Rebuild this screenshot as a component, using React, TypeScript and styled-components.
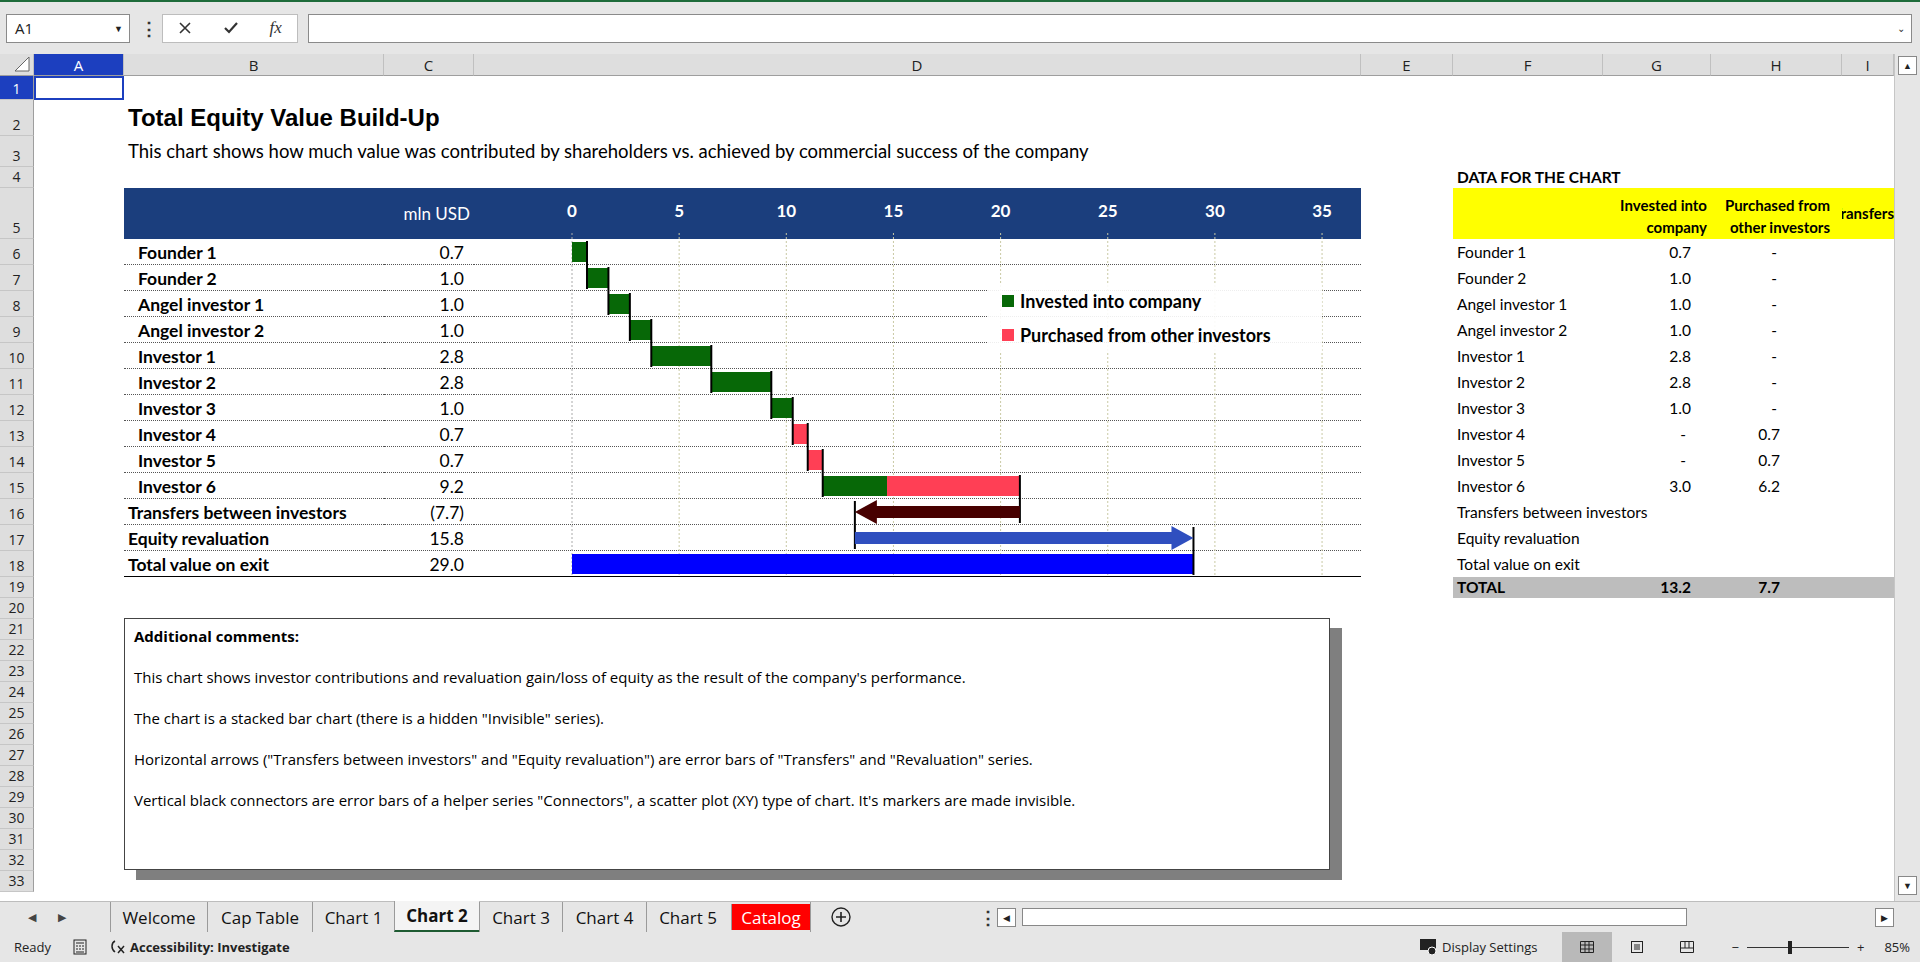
import React from "react";
import styled, { createGlobalStyle, css } from "styled-components";

const Global = createGlobalStyle`
  html, body { margin: 0; padding: 0; height: 100%; overflow: hidden; }
  body { font-family: Lato, "Open Sans", sans-serif; background: #e6e6e6; }
  #root { height: 100%; }
`;

const COLS = [34, 90, 260, 90, 887, 92, 150, 108, 131, 52];
const COLNAMES = ["", "A", "B", "C", "D", "E", "F", "G", "H", "I"];
const GRID = COLS.map((c) => c + "px").join(" ");
const BLUE = "#1b3e7d";

const Page = styled.div`
  width: 1920px; height: 962px; display: flex; flex-direction: column; background: #e6e6e6;
  border-top: 2px solid #1e6b3a; box-sizing: border-box;
`;
const FormulaBar = styled.div`
  height: 52px; display: flex; align-items: center; gap: 10px; padding: 0 8px 0 6px; box-sizing: border-box;
`;
const NameBox = styled.div`
  width: 124px; height: 29px; background: #fff; border: 1px solid #8a8a8a; box-sizing: border-box;
  display: flex; align-items: center; justify-content: space-between; padding: 0 6px 0 8px;
  font: 15px "Open Sans", sans-serif; color: #222;
`;
const Dots = styled.div`font: bold 18px "Open Sans", sans-serif; color: #333; width: 12px; text-align: center;`;
const FxBox = styled.div`
  width: 136px; height: 29px; background: #fff; border: 1px solid #bdbdbd; box-sizing: border-box;
  display: flex; align-items: center; justify-content: space-around; font-size: 18px; color: #333;
`;
const Fx = styled.span`font: italic 17px "Liberation Serif", serif;`;
const Formula = styled.div`
  flex: 1; height: 29px; background: #fff; border: 1px solid #8a8a8a; box-sizing: border-box;
  display: flex; align-items: center; justify-content: flex-end; padding-right: 6px; font-size: 12px; color: #333;
`;
const SheetWrap = styled.div`flex: 1; display: flex; min-height: 0; overflow: hidden;`;
const Sheet = styled.div`flex: 1; background: #fff; position: relative; overflow: hidden;`;
const VScroll = styled.div`
  width: 26px; background: #e6e6e6; display: flex; flex-direction: column; justify-content: space-between;
  padding: 2px 3px 6px; box-sizing: border-box; border-left: 1px solid #c6c6c6;
`;
const SBtn = styled.div`
  width: 19px; height: 19px; border: 1px solid #888; background: #fff; box-sizing: border-box;
  display: flex; align-items: center; justify-content: center; font-size: 9px; color: #222;
`;
const Row = styled.div<{ $h: number }>`
  display: grid; grid-template-columns: ${GRID}; height: ${(p) => p.$h}px;
`;
const ColHead = styled.div<{ $sel?: boolean }>`
  background: ${(p) => (p.$sel ? "#1c3fbf" : "#dedede")}; color: ${(p) => (p.$sel ? "#fff" : "#222")};
  border-right: 1px solid #c0c0c0; border-bottom: 1px solid #9e9e9e; box-sizing: border-box;
  font: 15px "Open Sans", sans-serif; display: flex; align-items: center; justify-content: center;
`;
const Corner = styled(ColHead)`position: relative;`;
const RowHead = styled.div<{ $sel?: boolean }>`
  background: ${(p) => (p.$sel ? "#1c3fbf" : "#dedede")}; color: ${(p) => (p.$sel ? "#fff" : "#222")};
  border-bottom: 1px solid #c6c6c6; border-right: 1px solid #9e9e9e; box-sizing: border-box;
  font: 14px "Open Sans", sans-serif; display: flex; align-items: flex-end; justify-content: center; padding-bottom: 1px;
`;
type CellP = {
  $bg?: string; $line?: "dot" | "solid"; $align?: string; $bold?: boolean; $color?: string;
  $size?: number; $pad?: number; $valign?: string; $font?: string;
};
const Cell = styled.div<CellP>`
  position: relative; box-sizing: border-box; white-space: nowrap; overflow: visible; display: flex;
  align-items: ${(p) => p.$valign || "flex-end"}; justify-content: ${(p) => p.$align || "flex-start"};
  padding: 0 ${(p) => p.$pad ?? 4}px 1px; background: ${(p) => p.$bg || "transparent"};
  color: ${(p) => p.$color || "#000"}; font-weight: ${(p) => (p.$bold ? 700 : 400)};
  font-size: ${(p) => p.$size || 16}px; font-family: ${(p) => p.$font || 'Lato, "Open Sans", sans-serif'};
  ${(p) => p.$line === "dot" && css`border-bottom: 1px dotted #555;`}
  ${(p) => p.$line === "solid" && css`border-bottom: 1px solid #000;`}
`;
const Clip = styled(Cell)`overflow: hidden; justify-content: flex-end; padding-right: 0;`;
const SelCell = styled(Cell)`border: 2px solid #1c3fbf;`;
const TwoLine = styled.div`text-align: right; line-height: 22px;`;

const ChartSvg = styled.svg`position: absolute; left: 0; top: 0; overflow: visible; pointer-events: none; z-index: 1;`;
const Legend = styled.div`
  position: absolute; left: 988px; top: 230px; width: 334px; padding: 6px 14px; box-sizing: border-box;
  background: rgba(255,255,255,0.9); display: flex; flex-direction: column; gap: 12px; z-index: 2;
  font: 700 18px Lato, sans-serif;
`;
const LegItem = styled.div`display: flex; align-items: center; gap: 6px;`;
const Swatch = styled.span<{ $c: string }>`width: 12px; height: 12px; background: ${(p) => p.$c};`;
const Comment = styled.div`
  position: absolute; left: 124px; top: 564px; width: 1206px; height: 252px; background: #fff;
  border: 1px solid #444; box-sizing: border-box; box-shadow: 12px 10px 0 #7f7f7f; padding: 6px 9px;
  font: 15px "Open Sans", sans-serif; color: #000; z-index: 2;
`;
const CLine = styled.p<{ $b?: boolean }>`margin: 0 0 19px; line-height: 22px; font-weight: ${(p) => (p.$b ? 700 : 400)};`;

const TabBar = styled.div`height: 30px; display: flex; align-items: stretch; border-top: 1px solid #bdbdbd; background: #e6e6e6;`;
const TabNav = styled.div`width: 110px; display: flex; align-items: center; gap: 22px; padding-left: 28px; font-size: 11px; color: #444; box-sizing: border-box;`;
const Tab = styled.div<{ $active?: boolean; $red?: boolean; $w: number }>`
  width: ${(p) => p.$w}px; display: flex; align-items: center; justify-content: center;
  border-left: 1px solid #9a9a9a; font: ${(p) => (p.$active ? 700 : 400)} 17px "Open Sans", sans-serif;
  color: ${(p) => (p.$red ? "#fff" : "#111")}; background: ${(p) => (p.$red ? "#ff0000" : p.$active ? "#f4f4f4" : "transparent")};
  ${(p) => p.$active && css`border-bottom: 2px solid #1e5b32; margin-top: -1px;`}
  ${(p) => p.$red && css`margin: 2px 0 2px 2px;`}
`;
const AddTab = styled.div`width: 60px; display: flex; align-items: center; justify-content: center; border-left: 1px solid #9a9a9a;`;
const HScrollArea = styled.div`flex: 1; display: flex; align-items: center; gap: 6px; padding: 0 26px 0 18px;`;
const HTrack = styled.div`flex: 1; display: flex; align-items: center;`;
const HThumb = styled.div`width: 665px; height: 18px; background: #fff; border: 1px solid #888; box-sizing: border-box;`;
const Status = styled.div`
  height: 30px; display: flex; align-items: center; padding: 0 10px 0 14px; font: 13px "Open Sans", sans-serif; color: #222;
`;
const StatusLeft = styled.div`display: flex; align-items: center; gap: 22px; flex: 1;`;
const StatusRight = styled.div`display: flex; align-items: stretch; height: 100%; gap: 0;`;
const ViewBtn = styled.div<{ $on?: boolean }>`width: 50px; display: flex; align-items: center; justify-content: center; background: ${(p) => (p.$on ? "#b9b9b9" : "transparent")};`;
const Zoom = styled.div`display: flex; align-items: center; gap: 8px; padding-left: 20px;`;
const Slider = styled.div`position: relative; width: 102px; height: 1px; background: #333;`;
const Knob = styled.div`position: absolute; left: 41px; top: -6px; width: 4px; height: 13px; background: #222;`;
const Bold = styled.b`font-weight: 700;`;

const ROWH = [24, 36, 31, 21, 51, ...Array(13).fill(26), ...Array(15).fill(21)];

const data: [string, string, string, string][] = [
  ["Founder 1", "0.7", "0.7", "-"],
  ["Founder 2", "1.0", "1.0", "-"],
  ["Angel investor 1", "1.0", "1.0", "-"],
  ["Angel investor 2", "1.0", "1.0", "-"],
  ["Investor 1", "2.8", "2.8", "-"],
  ["Investor 2", "2.8", "2.8", "-"],
  ["Investor 3", "1.0", "1.0", "-"],
  ["Investor 4", "0.7", "-", "0.7"],
  ["Investor 5", "0.7", "-", "0.7"],
  ["Investor 6", "9.2", "3.0", "6.2"],
  ["Transfers between investors", "(7.7)", "", ""],
  ["Equity revaluation", "15.8", "", ""],
  ["Total value on exit", "29.0", "", ""],
];

const U = 21.43, X0 = 98, HDR = 51, RH = 26;
const x = (v: number) => X0 + v * U;
const rt = (i: number) => HDR + i * RH;
const GREEN = "#076807", RED = "#ff3f55";

function Chart() {
  const bars: [number, number, number, string][] = [
    [0, 0, 0.7, GREEN], [1, 0.7, 1, GREEN], [2, 1.7, 1, GREEN], [3, 2.7, 1, GREEN],
    [4, 3.7, 2.8, GREEN], [5, 6.5, 2.8, GREEN], [6, 9.3, 1, GREEN], [7, 10.3, 0.7, RED],
    [8, 11.0, 0.7, RED], [9, 11.7, 3.0, GREEN], [9, 14.7, 6.2, RED], [12, 0, 29, "#0000ff"],
  ];
  const conns: [number, number, number][] = [
    [0.7, 0, 1], [1.7, 1, 2], [2.7, 2, 3], [3.7, 3, 4], [6.5, 4, 5], [9.3, 5, 6], [10.3, 6, 7],
    [11.0, 7, 8], [11.7, 8, 9], [20.9, 9, 10], [13.2, 10, 11], [29, 11, 12],
  ];
  const ty = rt(10) + 13, ey = rt(11) + 13;
  return (
    <ChartSvg width={887} height={HDR + 13 * RH}>
      {[0, 5, 10, 15, 20, 25, 30, 35].map((v) => (
        <g key={v}>
          <text x={x(v)} y={29} fill="#fff" fontSize={17} fontWeight={700} textAnchor="middle" fontFamily="Lato, sans-serif">{v}</text>
          <line x1={x(v)} x2={x(v)} y1={HDR - 6} y2={rt(13)} stroke={v === 0 ? "#aaa" : "#c9c9a4"} strokeDasharray="2 2" />
        </g>
      ))}
      {bars.map(([i, s, w, c], k) => (
        <rect key={k} x={x(s)} y={rt(i) + 3} width={w * U} height={20} fill={c} />
      ))}
      {conns.map(([v, a, b], k) => (
        <line key={k} x1={x(v)} x2={x(v)} y1={rt(a) + 2} y2={rt(b) + 24} stroke="#000" strokeWidth={2} />
      ))}
      <polygon
        points={`${x(20.9)},${ty - 6} ${x(13.2) + 22},${ty - 6} ${x(13.2) + 22},${ty - 12} ${x(13.2)},${ty} ${x(13.2) + 22},${ty + 12} ${x(13.2) + 22},${ty + 6} ${x(20.9)},${ty + 6}`}
        fill="#470000"
      />
      <polygon
        points={`${x(13.2)},${ey - 6} ${x(29) - 22},${ey - 6} ${x(29) - 22},${ey - 12} ${x(29)},${ey} ${x(29) - 22},${ey + 12} ${x(29) - 22},${ey + 6} ${x(13.2)},${ey + 6}`}
        fill="#2f4fbf"
      />
    </ChartSvg>
  );
}

function SheetRow({ r }: { r: number }) {
  const h = ROWH[r - 1];
  const idx = r - 6;
  const empty = (n: number) => Array.from({ length: n }, (_, i) => <Cell key={"e" + i} />);
  let cells: React.ReactNode;
  if (r === 1) {
    cells = [<SelCell key="a" />, ...empty(8)];
  } else if (r === 2) {
    cells = [<Cell key="a" />, <Cell key="b" $bold $size={24} $font='"Liberation Sans", Arial, sans-serif' $valign="center">Total Equity Value Build-Up</Cell>, ...empty(7)];
  } else if (r === 3) {
    cells = [<Cell key="a" />, <Cell key="b" $size={18.5} $valign="center">This chart shows how much value was contributed by shareholders vs. achieved by commercial success of the company</Cell>, ...empty(7)];
  } else if (r === 4) {
    cells = [...empty(5), <Cell key="f" $bold $size={15.5} $valign="center">DATA FOR THE CHART</Cell>, ...empty(3)];
  } else if (r === 5) {
    cells = [
      <Cell key="a" />,
      <Cell key="b" $bg={BLUE} />,
      <Cell key="c" $bg={BLUE} $color="#fff" $align="flex-end" $valign="center" $size={17}>mln USD</Cell>,
      <Cell key="d" $bg={BLUE}><Chart /></Cell>,
      <Cell key="e" />,
      <Cell key="f" $bg="#ffff00" />,
      <Cell key="g" $bg="#ffff00" $bold $size={15} $align="flex-end"><TwoLine>Invested into<br />company</TwoLine></Cell>,
      <Cell key="h" $bg="#ffff00" $bold $size={15} $align="flex-end" $pad={12}><TwoLine>Purchased from<br />other investors</TwoLine></Cell>,
      <Clip key="i" $bg="#ffff00" $bold $size={15} $valign="center">Transfers</Clip>,
    ];
  } else if (r >= 6 && r <= 18) {
    const d = data[idx];
    const line = r === 18 ? "solid" : "dot";
    cells = [
      <Cell key="a" />,
      <Cell key="b" $line={line} $bold $size={17.5} $pad={r <= 15 ? 14 : 4}>{d[0]}</Cell>,
      <Cell key="c" $line={line} $size={17.5} $align="flex-end" $pad={10}>{d[1]}</Cell>,
      <Cell key="d" $line={line} />,
      <Cell key="e" />,
      <Cell key="f" $size={15.5} $valign="center">{d[0]}</Cell>,
      <Cell key="g" $size={15.5} $valign="center" $align="flex-end" $pad={d[2] === "-" ? 25 : 20}>{d[2]}</Cell>,
      <Cell key="h" $size={15.5} $valign="center" $align="flex-end" $pad={d[3] === "-" ? 65 : 62}>{d[3]}</Cell>,
      <Cell key="i" />,
    ];
  } else if (r === 19) {
    cells = [
      ...empty(5),
      <Cell key="f" $bg="#bdbdbd" $bold $size={15.5} $valign="center">TOTAL</Cell>,
      <Cell key="g" $bg="#bdbdbd" $bold $size={15.5} $align="flex-end" $pad={20} $valign="center">13.2</Cell>,
      <Cell key="h" $bg="#bdbdbd" $bold $size={15.5} $align="flex-end" $pad={62} $valign="center">7.7</Cell>,
      <Cell key="i" $bg="#bdbdbd" />,
    ];
  } else {
    cells = empty(9);
  }
  return (
    <Row $h={h}>
      <RowHead $sel={r === 1}>{r}</RowHead>
      {cells}
    </Row>
  );
}

export default function App() {
  return (
    <Page>
      <Global />
      <FormulaBar>
        <NameBox><span>A1</span><span style={{ fontSize: 9 }}>▼</span></NameBox>
        <Dots>⋮</Dots>
        <FxBox>
          <svg width="14" height="14" viewBox="0 0 14 14"><path d="M2 2 L12 12 M12 2 L2 12" stroke="#333" strokeWidth="1.6" /></svg>
          <svg width="16" height="14" viewBox="0 0 16 14"><path d="M2 7 L6 11 L14 2" stroke="#333" strokeWidth="2.2" fill="none" /></svg>
          <Fx>fx</Fx>
        </FxBox>
        <Formula><span style={{ fontSize: 10 }}>⌄</span></Formula>
      </FormulaBar>
      <SheetWrap>
        <Sheet>
          <Row $h={22}>
            {COLNAMES.map((n, i) =>
              i === 0 ? (
                <Corner key={i}>
                  <svg width="16" height="16" viewBox="0 0 16 16" style={{ position: "absolute", right: 3, bottom: 3 }}>
                    <path d="M15 1 L15 15 L1 15 Z" fill="#fff" stroke="#666" />
                  </svg>
                </Corner>
              ) : (
                <ColHead key={i} $sel={i === 1}>{n}</ColHead>
              )
            )}
          </Row>
          {ROWH.map((_, i) => <SheetRow key={i} r={i + 1} />)}
          <Legend>
            <LegItem><Swatch $c={GREEN} />Invested into company</LegItem>
            <LegItem><Swatch $c={RED} />Purchased from other investors</LegItem>
          </Legend>
          <Comment>
            <CLine $b>Additional comments:</CLine>
            <CLine>This chart shows investor contributions and revaluation gain/loss of equity as the result of the company's performance.</CLine>
            <CLine>The chart is a stacked bar chart (there is a hidden "Invisible" series).</CLine>
            <CLine>Horizontal arrows ("Transfers between investors" and "Equity revaluation") are error bars of "Transfers" and "Revaluation" series.</CLine>
            <CLine>Vertical black connectors are error bars of a helper series "Connectors", a scatter plot (XY) type of chart. It's markers are made invisible.</CLine>
          </Comment>
        </Sheet>
        <VScroll>
          <SBtn>▲</SBtn>
          <SBtn>▼</SBtn>
        </VScroll>
      </SheetWrap>
      <TabBar>
        <TabNav><span>◀</span><span>▶</span></TabNav>
        <Tab $w={96}>Welcome</Tab>
        <Tab $w={104}>Cap Table</Tab>
        <Tab $w={81}>Chart 1</Tab>
        <Tab $w={84} $active>Chart 2</Tab>
        <Tab $w={82}>Chart 3</Tab>
        <Tab $w={83}>Chart 4</Tab>
        <Tab $w={82}>Chart 5</Tab>
        <Tab $w={78} $red>Catalog</Tab>
        <AddTab>
          <svg width="22" height="22" viewBox="0 0 22 22"><circle cx="11" cy="11" r="9" fill="none" stroke="#222" strokeWidth="1.4" /><path d="M11 6 V16 M6 11 H16" stroke="#222" strokeWidth="1.6" /></svg>
        </AddTab>
        <HScrollArea>
          <Dots style={{ marginLeft: 90 }}>⋮</Dots>
          <SBtn>◀</SBtn>
          <HTrack><HThumb /></HTrack>
          <SBtn>▶</SBtn>
        </HScrollArea>
      </TabBar>
      <Status>
        <StatusLeft>
          <span>Ready</span>
          <svg width="14" height="16" viewBox="0 0 14 16"><rect x="1" y="1" width="12" height="14" fill="none" stroke="#222" /><path d="M3 4 H11 M3 7 H5 M6 7 H8 M9 7 H11 M3 10 H5 M6 10 H8 M9 10 H11 M3 13 H11" stroke="#222" /></svg>
          <span style={{ display: "flex", alignItems: "center", gap: 3 }}>
            <svg width="18" height="16" viewBox="0 0 18 16"><path d="M6 2 C2 4 2 10 6 13 M9 7 L15 14 M15 7 L9 14" stroke="#222" strokeWidth="1.5" fill="none" /></svg>
            <Bold>Accessibility: Investigate</Bold>
          </span>
        </StatusLeft>
        <StatusRight>
          <span style={{ display: "flex", alignItems: "center", gap: 4, paddingRight: 24 }}>
            <svg width="18" height="16" viewBox="0 0 18 16"><rect x="0" y="0" width="16" height="11" fill="#222" /><circle cx="12" cy="12" r="4" fill="#222" stroke="#fff" /></svg>
            Display Settings
          </span>
          <ViewBtn $on><svg width="14" height="12" viewBox="0 0 14 12"><path d="M0.5 0.5 H13.5 V11.5 H0.5 Z M0.5 4 H13.5 M0.5 8 H13.5 M5 0.5 V11.5 M9 0.5 V11.5" stroke="#222" fill="none" /></svg></ViewBtn>
          <ViewBtn><svg width="12" height="12" viewBox="0 0 12 12"><rect x="0.5" y="0.5" width="11" height="11" fill="none" stroke="#222" /><path d="M3 4 H9 M3 6 H9 M3 8 H9" stroke="#222" /></svg></ViewBtn>
          <ViewBtn><svg width="14" height="12" viewBox="0 0 14 12"><path d="M0.5 0.5 H13.5 V11.5 H0.5 Z M5 0.5 V7 M9 0.5 V7 M0.5 7 H13.5" stroke="#222" fill="none" /></svg></ViewBtn>
          <Zoom>
            <span>−</span>
            <Slider><Knob /></Slider>
            <span>+</span>
            <span style={{ paddingLeft: 12 }}>85%</span>
          </Zoom>
        </StatusRight>
      </Status>
    </Page>
  );
}
